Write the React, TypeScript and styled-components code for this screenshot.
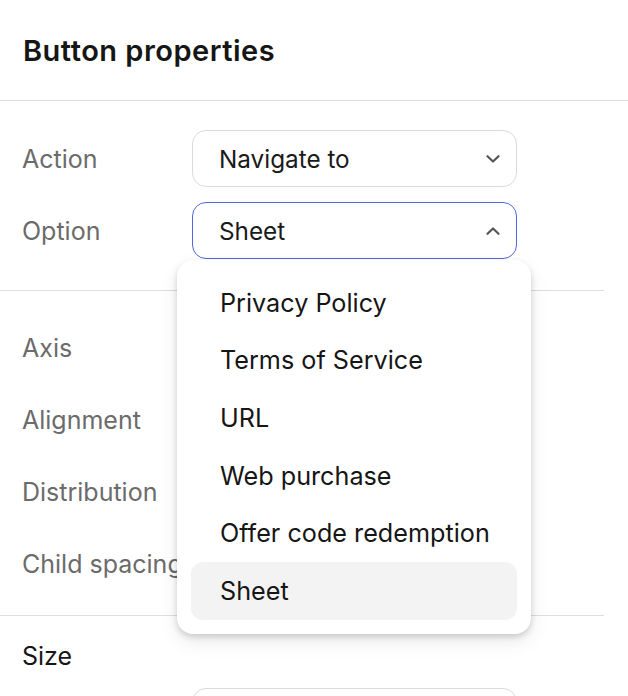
import React from "react";
import styled, { createGlobalStyle, css } from "styled-components";

const GlobalStyle = createGlobalStyle`
  html, body {
    margin: 0;
    padding: 0;
    background: #ffffff;
  }
  body {
    font-family: Inter, "Noto Sans", "Liberation Sans", sans-serif;
    color: #1a1a1a;
    -webkit-font-smoothing: antialiased;
  }
`;

const Panel = styled.div`
  width: 628px;
  height: 696px;
  overflow: hidden;
  background: #ffffff;
`;

const Header = styled.header`
  height: 101px;
  box-sizing: border-box;
  padding: 0 22px 0 23px;
  display: flex;
  align-items: center;
  border-bottom: 1px solid #dedede;
`;

const Title = styled.h1`
  margin: 0;
  font-size: 29px;
  font-weight: 600;
  letter-spacing: 0.5px;
  color: #161616;
`;

const Section = styled.section<{ $top: number; $bottom: number; $last?: boolean }>`
  margin-right: 24px;
  padding: ${({ $top, $bottom }) => `${$top}px 0 ${$bottom}px 22px`};
  display: flex;
  flex-direction: column;
  gap: 15px;
  ${({ $last }) =>
    !$last &&
    css`
      border-bottom: 1px solid #dedede;
    `}
`;

const Row = styled.div`
  display: grid;
  grid-template-columns: 170px 325px;
  align-items: center;
  height: 57px;
`;

const Label = styled.span`
  font-size: 25px;
  color: #6b6b6b;
  white-space: nowrap;
`;

const SectionTitle = styled.h2`
  margin: 0 0 2px;
  font-size: 25px;
  font-weight: 400;
  line-height: 30px;
  color: #161616;
`;

const SelectWrap = styled.div`
  position: relative;
`;

const SelectBox = styled.div<{ $open?: boolean }>`
  height: 57px;
  box-sizing: border-box;
  display: flex;
  align-items: center;
  justify-content: space-between;
  padding: 0 16px 0 26px;
  border-radius: 14px;
  border: 1px solid ${({ $open }) => ($open ? "#5466de" : "#dadada")};
  background: #ffffff;
  font-size: 24.3px;
  color: #1a1a1a;
`;

const Chevron = styled.svg`
  width: 14px;
  height: 8px;
  flex-shrink: 0;
`;

const Menu = styled.ul`
  position: absolute;
  top: 58px;
  left: -15px;
  width: 354px;
  margin: 0;
  padding: 14px;
  box-sizing: border-box;
  list-style: none;
  background: #ffffff;
  border-radius: 16px;
  box-shadow: 0 3px 6px rgba(0, 0, 0, 0.16), 0 8px 20px rgba(0, 0, 0, 0.08);
  z-index: 10;
`;

const MenuItem = styled.li<{ $active?: boolean }>`
  height: 57.6px;
  display: flex;
  align-items: center;
  padding-left: 29px;
  border-radius: 12px;
  font-size: 25.2px;
  color: #161616;
  white-space: nowrap;
  background: ${({ $active }) => ($active ? "#f3f3f3" : "transparent")};
`;

const ChevronIcon = ({ up }: { up?: boolean }) => (
  <Chevron viewBox="0 0 14 8" fill="none">
    <polyline
      points={up ? "1.5,6.8 7,1.5 12.5,6.8" : "1.5,1.2 7,6.5 12.5,1.2"}
      stroke="#555555"
      strokeWidth="2.2"
      strokeLinecap="round"
      strokeLinejoin="round"
    />
  </Chevron>
);

const options = [
  "Privacy Policy",
  "Terms of Service",
  "URL",
  "Web purchase",
  "Offer code redemption",
  "Sheet",
];

export default function App() {
  const selected = "Sheet";
  return (
    <>
      <GlobalStyle />
      <Panel>
        <Header>
          <Title>Button properties</Title>
        </Header>

        <Section $top={29} $bottom={31}>
          <Row>
            <Label>Action</Label>
            <SelectBox>
              <span>Navigate to</span>
              <ChevronIcon />
            </SelectBox>
          </Row>
          <Row>
            <Label>Option</Label>
            <SelectWrap>
              <SelectBox $open>
                <span>{selected}</span>
                <ChevronIcon up />
              </SelectBox>
              <Menu>
                {options.map((o) => (
                  <MenuItem key={o} $active={o === selected}>
                    {o}
                  </MenuItem>
                ))}
              </Menu>
            </SelectWrap>
          </Row>
        </Section>

        <Section $top={28} $bottom={23}>
          <Row>
            <Label>Axis</Label>
          </Row>
          <Row>
            <Label>Alignment</Label>
          </Row>
          <Row>
            <Label>Distribution</Label>
          </Row>
          <Row>
            <Label>Child spacing</Label>
          </Row>
        </Section>

        <Section $top={25} $bottom={0} $last>
          <SectionTitle>Size</SectionTitle>
          <Row>
            <Label />
            <SelectBox>
              <span />
              <ChevronIcon />
            </SelectBox>
          </Row>
        </Section>
      </Panel>
    </>
  );
}
